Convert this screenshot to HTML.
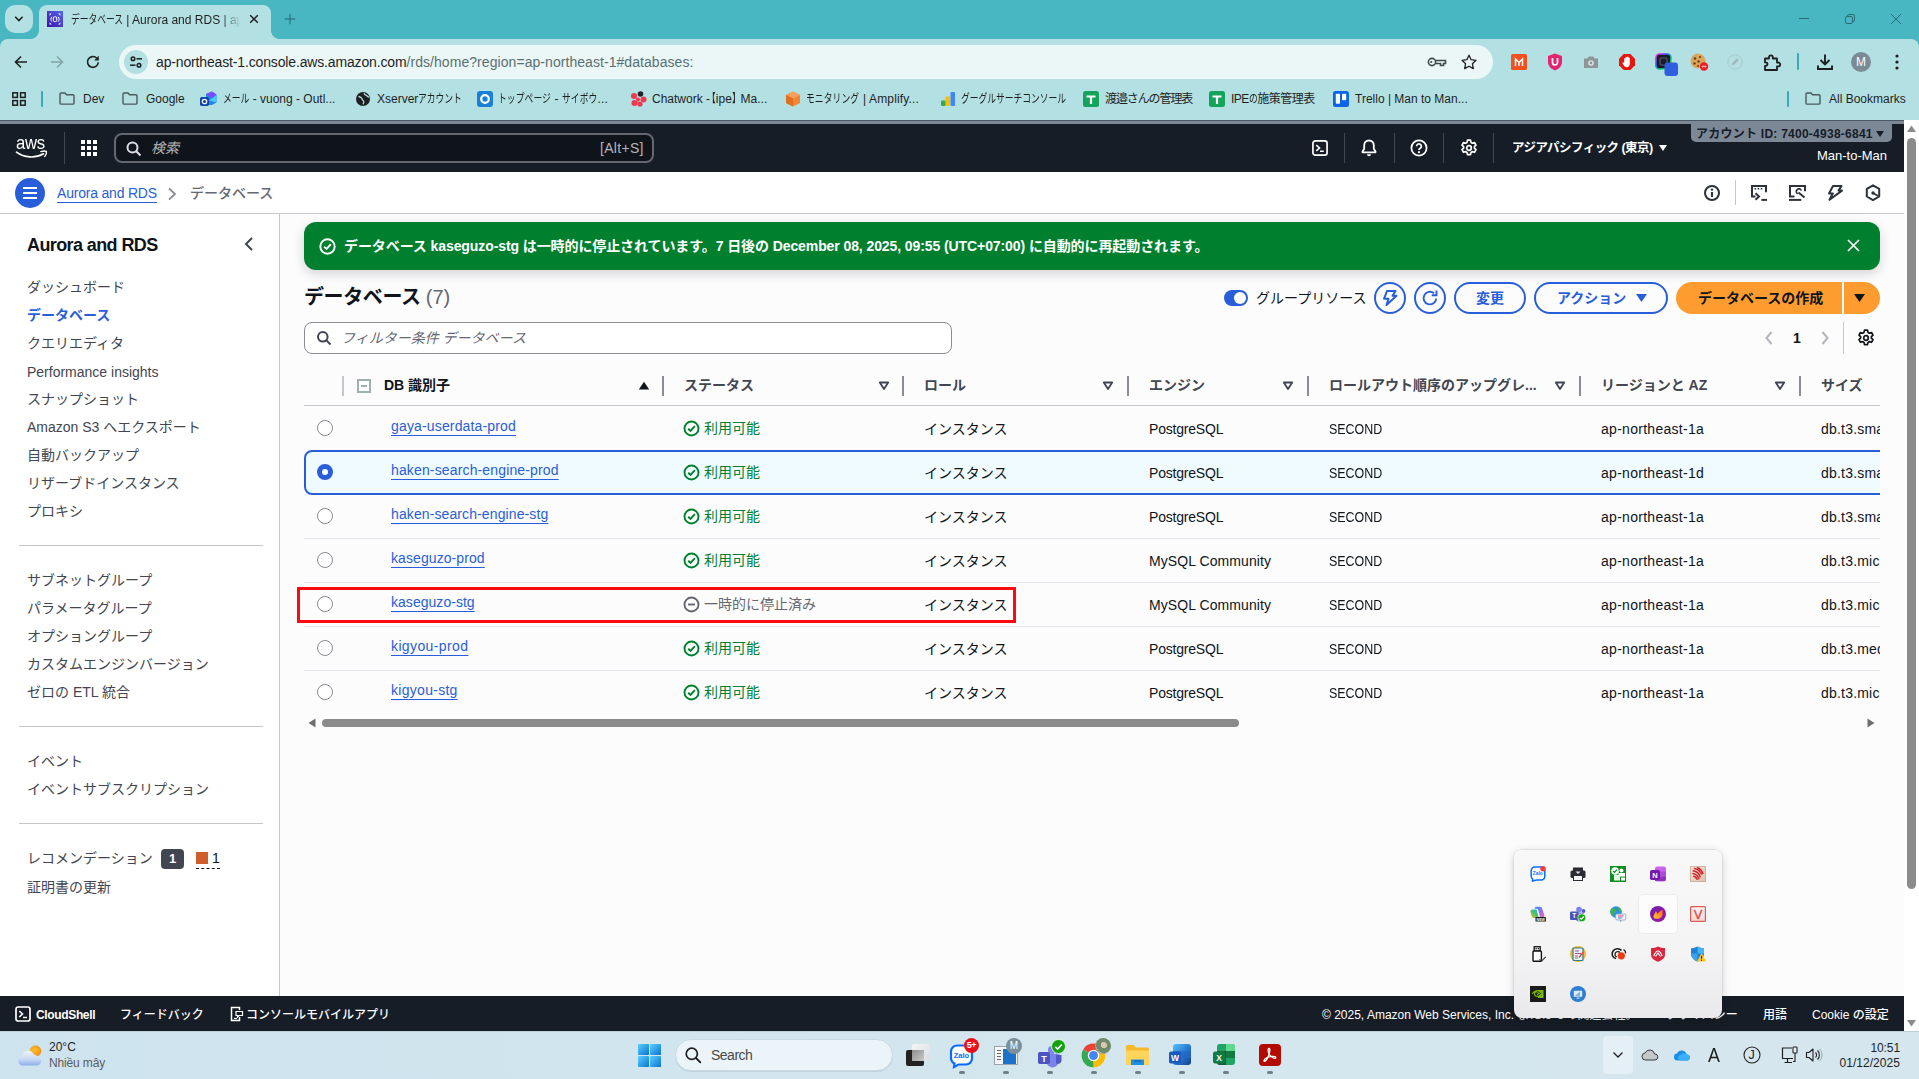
<!DOCTYPE html>
<html lang="ja">
<head>
<meta charset="utf-8">
<title>データベース | Aurora and RDS</title>
<style>
*{box-sizing:border-box;margin:0;padding:0}
html,body{width:1919px;height:1079px;overflow:hidden;background:#fff}
body{position:relative;font-family:"Liberation Sans","Noto Sans CJK JP",sans-serif;font-size:14px;color:#0f141a}
.abs{position:absolute}
.t{position:absolute;white-space:nowrap;line-height:20px}
svg{position:absolute;overflow:visible}
/* ---------- chrome ---------- */
#tabstrip{left:0;top:0;width:1919px;height:50px;background:#48b7c1}
#toolbar{left:0;top:39px;width:1919px;height:81px;background:#b3e0e3;border-radius:8px 8px 0 0}
#tabsearch{left:5px;top:5px;width:28px;height:28px;border-radius:10px;background:#b3e0e3}
#tab{left:39px;top:5px;width:232px;height:34px;border-radius:8px 8px 0 0;background:#b3e0e3}
#tab:before,#tab:after{content:"";position:absolute;bottom:0;width:8px;height:8px;background:radial-gradient(circle at 0 0,rgba(0,0,0,0) 7.5px,#b3e0e3 8px)}
#tab:before{left:-8px}
#tab:after{right:-8px;background:radial-gradient(circle at 100% 0,rgba(0,0,0,0) 7.5px,#b3e0e3 8px)}
#urlbar{left:119px;top:45px;width:1374px;height:34px;border-radius:17px;background:#ebf7f7}
.kk{display:inline-block;transform:scaleX(.73);transform-origin:0 50%;margin-right:calc(var(--n) * -3.24px)}
.ct{font-size:12px;color:#1f1f1f;line-height:16px}
.bm{font-size:12px;color:#1f1f1f;line-height:16px;top:91px}
/* ---------- aws ---------- */
#awsnav{left:0;top:120px;width:1904px;height:52px;background:#161d26}
#crumbs{left:0;top:172px;width:1904px;height:42px;background:#fff;border-bottom:1px solid #c6c6cd}
#side{left:0;top:214px;width:280px;height:782px;background:#fff;border-right:1px solid #c6c6cd}
#main{left:280px;top:214px;width:1624px;height:782px;background:#fcfcfd}
.sn{left:27px;color:#424650;font-size:14px}
.sdiv{left:19px;width:244px;height:1px;background:#c6c6cd}
.th{font-weight:700;color:#424650;top:375px}
.cdiv{top:376px;width:2px;height:20px;background:#8c8c94}
.row{left:304px;width:1576px;height:44px;border-bottom:1px solid #ebebf0}
.radio{left:317px;width:16px;height:16px;border-radius:50%;border:1px solid #8c8c94;background:#fff}
.lnk{left:391px;color:#295eda;text-decoration:underline;text-underline-offset:4px;text-decoration-thickness:1px;letter-spacing:.15px}
.ok{left:704px;color:#00802f}
.c3{left:924px}.c4{left:1149px}.c5{left:1329px}.c6{left:1601px}.c7{left:1821px}
#awsfoot{left:0;top:996px;width:1904px;height:35px;background:#161d26}
.ft{font-size:12px;color:#fff;line-height:16px;top:1007px}
/* ---------- windows ---------- */
#taskbar{left:0;top:1031px;width:1919px;height:48px;border-top:1px solid #bfcdd5;background:linear-gradient(90deg,#cde3ee 0%,#d3e6ee 50%,#d6e6ee 100%)}
#tray{left:1514px;top:850px;width:208px;height:168px;border-radius:8px;background:linear-gradient(180deg,#f8f8f8 0%,#f4f4f5 60%,#e9e9ec 100%);box-shadow:0 2px 10px rgba(0,0,0,.18),0 0 0 1px rgba(0,0,0,.06)}
</style>
</head>
<body>
<!-- CHROME -->
<div class="abs" id="tabstrip"></div>
<div class="abs" id="toolbar"></div>
<div class="abs" id="tabsearch"></div>
<div class="abs" id="tab"></div>
<div class="abs" id="urlbar"></div>
<!--CHROME-CONTENT-START-->
<!-- tab search chevron -->
<svg style="left:12px;top:14px" width="13" height="10" viewBox="0 0 13 10"><path d="M3.2 2.8 6.9 6.5 10.600 2.8" fill="none" stroke="#1f1f1f" stroke-width="1.600"/></svg>
<!-- favicon -->
<svg style="left:47px;top:11px" width="16" height="16" viewBox="0 0 16 16"><defs><linearGradient id="fg" x1="0" y1="1" x2="1" y2="0"><stop offset="0" stop-color="#3a12a8"/><stop offset="1" stop-color="#5568f0"/></linearGradient></defs><rect width="16" height="16" fill="url(#fg)"/><g fill="#fff"><path d="M2.600 2.600h2.200L2.600 4.800zM13.400 2.600v2.200L11.200 2.600zM2.600 13.400v-2.200l2.200 2.200zM13.400 13.400h-2.200l2.200-2.200z"/></g><g fill="none" stroke="#fff" stroke-width="1"><rect x="6.300" y="5.800" width="3.400" height="4.800" rx="1.200"/><path d="M4.800 5.800c-1.200 1.400-1.200 3.400 0 4.800M11.200 5.800c1.200 1.400 1.200 3.400 0 4.800"/></g></svg>
<div class="t ct" style="left:71px;top:8px;line-height:24px;width:172px;overflow:hidden;-webkit-mask-image:linear-gradient(90deg,#000 150px,transparent 170px);mask-image:linear-gradient(90deg,#000 150px,transparent 170px)"><span class="kk" style="--n:6">データベース</span> | Aurora and RDS | ap-northeast-1</div>
<svg style="left:249px;top:14px" width="10" height="10" viewBox="0 0 10 10"><path d="M1.2 1.2 8.8 8.8M8.8 1.2 1.2 8.8" stroke="#1f1f1f" stroke-width="1.5"/></svg>
<svg style="left:284px;top:13px" width="12" height="12" viewBox="0 0 12 12"><path d="M6 .8v10.4M.8 6h10.4" stroke="#2f7f88" stroke-width="1.4"/></svg>
<!-- window controls -->
<svg style="left:1798px;top:13px" width="12" height="12" viewBox="0 0 12 12"><path d="M1 5.5h10" stroke="#2c6d75" stroke-width="1"/></svg>
<svg style="left:1844px;top:13px" width="12" height="12" viewBox="0 0 12 12"><g fill="none" stroke="#2c6d75" stroke-width="1"><rect x="1.5" y="3.5" width="7" height="7" rx="1.5"/><path d="M3.5 3.5v-.5a1.5 1.5 0 0 1 1.500-1.500h4a1.500 1.500 0 0 1 1.500 1.500v4a1.500 1.500 0 0 1-1.500 1.500h-.5"/></g></svg>
<svg style="left:1890px;top:13px" width="12" height="12" viewBox="0 0 12 12"><path d="M1 1 11 11M11 1 1 11" stroke="#2c6d75" stroke-width="1"/></svg>
<!-- nav buttons -->
<svg style="left:13px;top:54px" width="16" height="16" viewBox="0 0 16 16"><path d="M14 8H3M8 2.500 2.500 8 8 13.500" fill="none" stroke="#1f1f1f" stroke-width="1.600"/></svg>
<svg style="left:49px;top:54px" width="16" height="16" viewBox="0 0 16 16"><path d="M2 8h11M8 2.500 13.500 8 8 13.500" fill="none" stroke="#84a4a7" stroke-width="1.500"/></svg>
<svg style="left:85px;top:54px" width="16" height="16" viewBox="0 0 16 16"><path d="M13.300 8.300A5.400 5.400 0 1 1 11.700 4.100" fill="none" stroke="#1f1f1f" stroke-width="1.600"/><path d="M13.800 1.800v4.600H9.200z" fill="#1f1f1f"/></svg>
<!-- site info -->
<div class="abs" style="left:124px;top:50px;width:24px;height:24px;border-radius:12px;background:#b3e0e3"></div>
<svg style="left:129px;top:55px" width="14" height="14" viewBox="0 0 14 14"><g fill="none" stroke="#1f1f1f" stroke-width="1.500"><circle cx="4" cy="3.800" r="1.800"/><path d="M7.500 3.800H13"/><circle cx="10" cy="10.200" r="1.800"/><path d="M1 10.200H6.500"/></g></svg>
<div class="t" style="left:156px;top:52px;font-size:14px;color:#1f1f1f;letter-spacing:-.15px">ap-northeast-1.console.aws.amazon.com<span style="color:#5a6f72;letter-spacing:.06px">/rds/home?region=ap-northeast-1#databases:</span></div>
<!-- key -->
<svg style="left:1427px;top:55px" width="20" height="14" viewBox="0 0 20 14"><g fill="none" stroke="#3c4a4c" stroke-width="1.600"><circle cx="5" cy="7" r="3.600"/><path d="M8.600 5.500H18.500V8.500H16.500V10.500H13.500V8.500H8.600"/></g><circle cx="4.300" cy="7" r="1.100" fill="#3c4a4c"/></svg>
<!-- star -->
<svg style="left:1460px;top:53px" width="18" height="18" viewBox="0 0 18 18"><path d="M9 2.200l2.100 4.500 4.900.6-3.600 3.400.9 4.900L9 13.200l-4.300 2.400.9-4.900L2 7.300l4.900-.6z" fill="none" stroke="#1f1f1f" stroke-width="1.300" stroke-linejoin="round"/></svg>
<!-- extensions -->
<svg style="left:1511px;top:54px" width="16" height="16" viewBox="0 0 16 16"><rect width="16" height="16" rx="1.500" fill="#f4511e"/><path d="M4.500 12V5l3.500 3.500L11.500 5v7M8 8.500V12" fill="none" stroke="#fff" stroke-width="1.500"/></svg>
<svg style="left:1547px;top:53px" width="16" height="18" viewBox="0 0 16 18"><path d="M8 .5 15 3v6c0 4-3 7-7 8.500C4 16 1 13 1 9V3z" fill="#e6246f"/><path d="M5.500 5v4.500a2.500 2.500 0 0 0 5 0V5" fill="none" stroke="#fff" stroke-width="1.700"/></svg>
<svg style="left:1583px;top:55px" width="16" height="14" viewBox="0 0 16 14"><path d="M1 3.500h3.500L5.800 1.500h4.400l1.300 2H15V13H1z" fill="#8c9597"/><circle cx="8" cy="8" r="2.800" fill="#dfe9ea"/><circle cx="8" cy="8" r="1.400" fill="#8c9597"/></svg>
<svg style="left:1619px;top:54px" width="16" height="16" viewBox="0 0 16 16"><path d="M4.700 0h6.600L16 4.700v6.600L11.300 16H4.700L0 11.300V4.700z" fill="#e8140e"/><path d="M5.200 8.500V4.800a.7.700 0 0 1 1.400 0V3.600a.7.700 0 0 1 1.400 0v-.4a.7.700 0 0 1 1.400 0v1a.7.700 0 0 1 1.400 0V10c0 2-1.200 3.200-3 3.200-1.600 0-2.400-.8-3.200-2.200L3.500 9.200c-.3-.6.500-1.100 1-.6z" fill="#fff"/></svg>
<svg style="left:1654.500px;top:53px" width="24" height="24" viewBox="0 0 24 24"><defs><linearGradient id="rb" x1="0" y1="0" x2="1" y2="1"><stop offset="0" stop-color="#ff2bd1"/><stop offset=".35" stop-color="#3d5afe"/><stop offset=".7" stop-color="#00e676"/><stop offset="1" stop-color="#ffea00"/></linearGradient></defs><rect x="1" y="1" width="15" height="15" rx="3.500" fill="#1b1b2a" stroke="url(#rb)" stroke-width="1.600"/><rect x="5" y="5" width="7" height="7" rx="1.500" fill="none" stroke="#555a70" stroke-width="1.200"/><rect x="9.500" y="9.500" width="13.500" height="13.500" rx="3" fill="#2f5fe0"/></svg>
<svg style="left:1690px;top:53px" width="20" height="20" viewBox="0 0 20 20"><circle cx="8" cy="8" r="7.500" fill="#dba55c"/><g fill="#6b3d14"><circle cx="5" cy="5.500" r="1.300"/><circle cx="10" cy="4" r="1.100"/><circle cx="4.500" cy="10.500" r="1.200"/><circle cx="8.500" cy="8.500" r="1.200"/><circle cx="8" cy="13" r="1"/></g><circle cx="14" cy="13.500" r="4.200" fill="#ea1c24"/><path d="M12.300 13.500h3.400M13 12.200l-1 1.300 1 1.300M15 12.200l1 1.300-1 1.300" stroke="#fff" stroke-width=".6" fill="none"/></svg>
<svg style="left:1727px;top:54px" width="16" height="16" viewBox="0 0 16 16"><circle cx="8" cy="8" r="7.200" fill="none" stroke="#a9c9cc" stroke-width="1"/><path d="M4.800 11.200 5.300 9 10 4.300l1.700 1.700L7 10.700z" fill="#a3b6b8"/></svg>
<svg style="left:1762px;top:52px" width="20" height="20" viewBox="0 0 20 20"><path d="M3 6.500h4V5.200a1.900 1.900 0 1 1 3.800 0V6.500H15v4h1.300a1.900 1.900 0 1 1 0 3.800H15V18H3v-4.200h.8a1.700 1.700 0 1 0 0-3.400H3z" fill="none" stroke="#1f1f1f" stroke-width="1.800" stroke-linejoin="round"/></svg>
<div class="abs" style="left:1797px;top:53px;width:2px;height:17px;background:#3aa9b4;border-radius:1px"></div>
<svg style="left:1816px;top:53px" width="18" height="18" viewBox="0 0 18 18"><path d="M9 1.500v9.500M4.500 7 9 11.500 13.500 7M2 12.500V16h14v-3.500" fill="none" stroke="#1f1f1f" stroke-width="1.900"/></svg>
<div class="abs" style="left:1851px;top:52px;width:20px;height:20px;border-radius:10px;background:#7b8b96;color:#fff;font-size:12px;line-height:20px;text-align:center">M</div>
<svg style="left:1895px;top:54px" width="4" height="16" viewBox="0 0 4 16"><g fill="#1f1f1f"><circle cx="2" cy="2" r="1.600"/><circle cx="2" cy="8" r="1.600"/><circle cx="2" cy="14" r="1.600"/></g></svg>
<!-- bookmarks bar -->
<svg style="left:12px;top:92px" width="14" height="14" viewBox="0 0 14 14"><g fill="none" stroke="#1f1f1f" stroke-width="1.500"><rect x=".8" y=".8" width="4.600" height="4.600"/><rect x="8.600" y=".8" width="4.600" height="4.600"/><rect x=".8" y="8.600" width="4.600" height="4.600"/><rect x="8.600" y="8.600" width="4.600" height="4.600"/></g></svg>
<div class="abs" style="left:41px;top:91px;width:2px;height:16px;background:#3aa9b4;border-radius:1px"></div>
<svg class="fold" style="left:59px;top:92px" width="16" height="13" viewBox="0 0 16 13"><path d="M1 2.200A1.200 1.200 0 0 1 2.200 1H6l1.500 1.700h6.300A1.200 1.200 0 0 1 15 3.900v7A1.200 1.200 0 0 1 13.800 12.100H2.200A1.200 1.200 0 0 1 1 10.900z" fill="none" stroke="#4a5a5c" stroke-width="1.400"/></svg>
<div class="t bm" style="left:83px">Dev</div>
<svg class="fold" style="left:122px;top:92px" width="16" height="13" viewBox="0 0 16 13"><path d="M1 2.200A1.200 1.200 0 0 1 2.200 1H6l1.500 1.700h6.300A1.200 1.200 0 0 1 15 3.900v7A1.200 1.200 0 0 1 13.800 12.100H2.200A1.200 1.200 0 0 1 1 10.900z" fill="none" stroke="#4a5a5c" stroke-width="1.400"/></svg>
<div class="t bm" style="left:146px">Google</div>
<svg style="left:200px;top:91px" width="17" height="16" viewBox="0 0 17 16"><path d="M6 3 12 .5 16.500 3.500v8L12 14H6z" fill="#1e88e5"/><path d="M6 3l6-2.500L16.500 3.500 11 7z" fill="#7c4dff"/><path d="M16.500 4 9 9.500l7.500 2z" fill="#4fc3f7"/><rect x="0" y="6" width="9" height="9" rx="1.800" fill="#0d47a1"/><circle cx="4.500" cy="10.500" r="2.200" fill="none" stroke="#fff" stroke-width="1.300"/></svg>
<div class="t bm" style="left:223px"><span class="kk" style="--n:3">メール</span> - vuong - Outl...</div>
<svg style="left:356px;top:92px" width="14" height="14" viewBox="0 0 14 14"><circle cx="7" cy="7" r="7" fill="#1f1f1f"/><path d="M2.500 4.500c1.500 0 2 .8 3 1.500s.5 2 1.500 2.500 1 2.500 0 3.800M8 1.200c.2 1.500 1.200 1.800 2.300 2.200s1.500 1.800 2.700 1.600" fill="none" stroke="#b3e0e3" stroke-width="1.300"/></svg>
<div class="t bm" style="left:377px">Xserver<span class="kk" style="--n:5">アカウント</span></div>
<svg style="left:477px;top:91px" width="16" height="16" viewBox="0 0 16 16"><rect width="16" height="16" rx="3" fill="#1a7fd6"/><circle cx="8" cy="8" r="3.800" fill="none" stroke="#fff" stroke-width="2.200"/></svg>
<div class="t bm" style="left:498px;letter-spacing:.12px"><span class="kk" style="--n:6">トップページ</span> - <span class="kk" style="--n:4">サイボウ</span>...</div>
<svg style="left:630px;top:91px" width="17" height="16" viewBox="0 0 17 16"><circle cx="10.500" cy="3" r="2.800" fill="#1f2430"/><g fill="#f0384e"><circle cx="4" cy="5" r="3"/><circle cx="13.500" cy="8.500" r="3"/><circle cx="4.500" cy="12" r="3"/><circle cx="10" cy="13" r="2.600"/><circle cx="8" cy="8.500" r="2"/></g></svg>
<div class="t bm" style="left:652px">Chatwork -<span class="kk" style="--n:1;margin-left:-3px">【</span>ipe<span class="kk" style="--n:1">】</span>Ma...</div>
<svg style="left:785px;top:91px" width="16" height="16" viewBox="0 0 16 16"><path d="M8 .5 15 4v8L8 15.500 1 12V4z" fill="#f58536"/><path d="M8 .5 15 4 8 7.500 1 4z" fill="#f9a05c"/><path d="M8 7.500V15.500L1 12V4z" fill="#e0701f"/></svg>
<div class="t bm" style="left:806px;letter-spacing:.15px"><span class="kk" style="--n:6">モニタリング</span> | Amplify...</div>
<svg style="left:940px;top:91px" width="16" height="16" viewBox="0 0 16 16"><rect x="10.500" y="1" width="4.500" height="14" rx="1" fill="#4285f4"/><rect x="5.500" y="5.500" width="4.500" height="9.500" rx="1" fill="#fbbc04"/><rect x="1" y="9.500" width="4.500" height="5.500" rx="1" fill="#34a853"/></svg>
<div class="t bm" style="left:961px"><span class="kk" style="--n:12">グーグルサーチコンソール</span></div>
<svg style="left:1083px;top:91px" width="16" height="16" viewBox="0 0 16 16"><rect width="16" height="16" rx="2.500" fill="#14a35b"/><path d="M3.500 5.500h9M8 5.500V13" stroke="#fff" stroke-width="2.200"/></svg>
<div class="t bm" style="left:1105px;letter-spacing:-1.100px">渡邉さんの管理表</div>
<svg style="left:1209px;top:91px" width="16" height="16" viewBox="0 0 16 16"><rect width="16" height="16" rx="2.500" fill="#14a35b"/><path d="M3.500 5.500h9M8 5.500V13" stroke="#fff" stroke-width="2.200"/></svg>
<div class="t bm" style="left:1231px;letter-spacing:-.5px">IPE<span class="kk" style="--n:1">の</span>施策管理表</div>
<svg style="left:1333px;top:91px" width="16" height="16" viewBox="0 0 16 16"><rect width="16" height="16" rx="2.500" fill="#0c66e4"/><rect x="2.800" y="2.800" width="4.200" height="10" rx=".8" fill="#fff"/><rect x="9" y="2.800" width="4.200" height="6.500" rx=".8" fill="#fff"/></svg>
<div class="t bm" style="left:1355px">Trello | Man to Man...</div>
<div class="abs" style="left:1787px;top:91px;width:2px;height:16px;background:#3aa9b4;border-radius:1px"></div>
<svg class="fold" style="left:1805px;top:92px" width="16" height="13" viewBox="0 0 16 13"><path d="M1 2.200A1.200 1.200 0 0 1 2.200 1H6l1.500 1.700h6.300A1.200 1.200 0 0 1 15 3.900v7A1.200 1.200 0 0 1 13.800 12.100H2.200A1.200 1.200 0 0 1 1 10.900z" fill="none" stroke="#4a5a5c" stroke-width="1.400"/></svg>
<div class="t bm" style="left:1829px">All Bookmarks</div>
<!--CHROME-CONTENT-END-->

<!-- AWS -->
<div class="abs" id="awsnav"></div>
<div class="abs" id="crumbs"></div>
<div class="abs" id="side"></div>
<div class="abs" id="main"></div>
<!--AWS-NAV-START-->
<div class="abs" style="left:0;top:120px;width:1904px;height:4px;background:#7c8896"></div>
<div class="abs" style="left:0;top:120px;width:1904px;height:1px;background:#4d5763"></div>
<!-- aws logo -->
<div class="t" style="left:16px;top:132px;font-size:19px;line-height:22px;color:#fff;transform:scaleX(.88);transform-origin:0 50%;letter-spacing:-.3px">aws</div>
<svg style="left:15px;top:150px" width="34" height="11" viewBox="0 0 34 11"><path d="M1.500 2.200c7.500 5.800 19 6.300 27 1.600" fill="none" stroke="#fff" stroke-width="1.700" stroke-linecap="round"/><path d="M25.800 1.600c2.200-.6 4.400-.7 5.600-.2.300 1.200-.3 3.400-1.600 5" fill="none" stroke="#fff" stroke-width="1.400" stroke-linecap="round"/></svg>
<div class="abs" style="left:64px;top:132px;width:1px;height:32px;background:#424650"></div>
<!-- services grid -->
<svg style="left:81px;top:140px" width="16" height="16" viewBox="0 0 16 16"><g fill="#fff"><rect x="0" y="0" width="4" height="4"/><rect x="6" y="0" width="4" height="4"/><rect x="12" y="0" width="4" height="4"/><rect x="0" y="6" width="4" height="4"/><rect x="6" y="6" width="4" height="4"/><rect x="12" y="6" width="4" height="4"/><rect x="0" y="12" width="4" height="4"/><rect x="6" y="12" width="4" height="4"/><rect x="12" y="12" width="4" height="4"/></g></svg>
<!-- search -->
<div class="abs" style="left:114px;top:133px;width:540px;height:30px;border:2px solid #656871;border-radius:8px;background:#0f141a"></div>
<svg style="left:126px;top:141px" width="16" height="16" viewBox="0 0 16 16"><circle cx="6.500" cy="6.500" r="5" fill="none" stroke="#dedee3" stroke-width="2"/><path d="M10.200 10.200 14.500 14.500" stroke="#dedee3" stroke-width="2"/></svg>
<div class="t" style="left:151px;top:138px;font-style:italic;color:#b4b4bb;font-size:14px">検索</div>
<div class="t" style="left:600px;top:138px;color:#b4b4bb;font-size:14px;letter-spacing:.3px">[Alt+S]</div>
<!-- right icons -->
<svg style="left:1312px;top:140px" width="16" height="16" viewBox="0 0 17 17"><rect x="1" y="1" width="15" height="15" rx="2.500" fill="none" stroke="#fff" stroke-width="1.800"/><path d="M4.500 5.500 8 8.500 4.500 11.500M8.500 12h4" fill="none" stroke="#fff" stroke-width="1.700"/></svg>
<div class="abs" style="left:1344px;top:133px;width:1px;height:30px;background:#424650"></div>
<svg style="left:1361px;top:139px" width="16" height="18" viewBox="0 0 16 18"><path d="M8 1.500c-3 0-4.800 2.200-4.800 5v3.200L1.500 12.500v.8h13v-.8l-1.700-2.800V6.500c0-2.800-1.800-5-4.800-5z" fill="none" stroke="#fff" stroke-width="1.800" stroke-linejoin="round"/><path d="M6 15.200a2 2 0 0 0 4 0z" fill="#fff"/></svg>
<div class="abs" style="left:1394px;top:133px;width:1px;height:30px;background:#424650"></div>
<svg style="left:1410px;top:139px" width="18" height="18" viewBox="0 0 18 18"><circle cx="9" cy="9" r="7.600" fill="none" stroke="#fff" stroke-width="1.800"/><path d="M6.600 7.200a2.400 2.400 0 1 1 3.600 2.100c-.8.500-1.200.9-1.200 1.700" fill="none" stroke="#fff" stroke-width="1.700"/><circle cx="9" cy="13.200" r="1.100" fill="#fff"/></svg>
<div class="abs" style="left:1443px;top:133px;width:1px;height:30px;background:#424650"></div>
<svg style="left:1460px;top:139px" width="18" height="18" viewBox="0 0 18 18"><path d="M7.500 1.200h3l.5 2.200 1.400.8 2.100-.7 1.500 2.600-1.600 1.500v1.600l1.600 1.500-1.500 2.600-2.100-.7-1.400.8-.5 2.200h-3L7 13.400l-1.400-.8-2.100.7L2 10.700l1.600-1.500V7.600L2 6.100l1.500-2.600 2.100.7L7 3.400z" fill="none" stroke="#fff" stroke-width="1.700" stroke-linejoin="round"/><circle cx="9" cy="9" r="2.300" fill="none" stroke="#fff" stroke-width="1.700"/></svg>
<div class="abs" style="left:1493px;top:133px;width:1px;height:30px;background:#424650"></div>
<div class="t" style="left:1512px;top:138px;color:#fff;font-size:12.500px;font-weight:700;letter-spacing:-.55px">アジアパシフィック (東京)</div>
<svg style="left:1658px;top:144px" width="10" height="8" viewBox="0 0 10 8"><path d="M1 1h8L5 7z" fill="#fff"/></svg>
<!-- account -->
<div class="abs" style="left:1691px;top:123px;width:201px;height:19px;background:#7c8896;border-radius:0 0 5px 5px"></div>
<div class="t" style="left:1696px;top:125px;font-size:12px;line-height:18px;font-weight:700;color:#161d26;letter-spacing:.25px">アカウント ID: 7400-4938-6841</div>
<svg style="left:1875px;top:130px" width="10" height="8" viewBox="0 0 10 8"><path d="M1 1h8L5 7z" fill="#161d26"/></svg>
<div class="t" style="left:1787px;top:146px;width:100px;text-align:right;color:#fff;font-size:13px">Man-to-Man</div>
<!-- breadcrumb row -->
<div class="abs" style="left:15px;top:178px;width:30px;height:30px;border-radius:15px;background:#295eda"></div>
<svg style="left:23px;top:186px" width="14" height="14" viewBox="0 0 14 14"><path d="M0 2h14M0 7h14M0 12h14" stroke="#fff" stroke-width="2"/></svg>
<div class="t" style="left:57px;top:183px;color:#295eda;text-decoration:underline;text-underline-offset:4px;text-decoration-thickness:1px;letter-spacing:-.2px">Aurora and RDS</div>
<svg style="left:167px;top:187px" width="10" height="14" viewBox="0 0 10 14"><path d="M2 1.500 8 7 2 12.500" fill="none" stroke="#8c8c94" stroke-width="1.800"/></svg>
<div class="t" style="left:190px;top:183px;color:#656871;font-weight:500">データベース</div>
<svg style="left:1704px;top:185px" width="16" height="16" viewBox="0 0 16 16"><circle cx="8" cy="8" r="7" fill="none" stroke="#2c313c" stroke-width="2"/><path d="M8 7v5" stroke="#2c313c" stroke-width="2"/><circle cx="8" cy="4.600" r="1.200" fill="#2c313c"/></svg>
<div class="abs" style="left:1735px;top:180px;width:1px;height:25px;background:#c6c6cd"></div>
<svg style="left:1751px;top:185px" width="16" height="16" viewBox="0 0 16 16"><path d="M15 7.300V1H1v10.500h3.500" fill="none" stroke="#2c313c" stroke-width="2"/><path d="M3.500 3.700h1.600M6.600 3.700h1.600M9.700 3.700h1.600" stroke="#2c313c" stroke-width="1.500"/><path d="M4.500 8.300 8 11.500l-3.500 3.200" fill="none" stroke="#2c313c" stroke-width="2"/><path d="M10.400 14.900H16" stroke="#2c313c" stroke-width="2"/></svg>
<svg style="left:1789px;top:185px" width="17" height="16" viewBox="0 0 17 16"><path d="M16 6.300V1H1v10.500h4.500" fill="none" stroke="#2c313c" stroke-width="2"/><path d="M0 14.900h12.300" stroke="#2c313c" stroke-width="2"/><path d="M9.500 7.500 15.500 12.500" stroke="#2c313c" stroke-width="2"/><path d="M12.300 5.500a2.600 2.600 0 1 0-3.600 3.300" fill="none" stroke="#2c313c" stroke-width="1.700"/></svg>
<svg style="left:1827px;top:184px" width="16" height="18" viewBox="0 0 16 18"><path d="M6 2h8.500l-3 4.600h3.500L2.500 15.800 5.800 9.500H2z" fill="none" stroke="#2c313c" stroke-width="2" stroke-linejoin="round"/></svg>
<svg style="left:1865px;top:184px" width="16" height="18" viewBox="0 0 16 18"><path d="M8 1.300 14.200 4.900v7.600L8 16.100 1.800 12.500V4.900z" fill="none" stroke="#2c313c" stroke-width="2" stroke-linejoin="round"/><circle cx="8" cy="9" r="1.700" fill="#2c313c"/><path d="M8 9l5.500 3.200" stroke="#2c313c" stroke-width="1.800"/></svg>
<!--AWS-NAV-END-->
<!--AWS-SIDE-START-->
<div class="t" style="left:27px;top:233px;font-size:18px;line-height:24px;font-weight:700;color:#0f141a;letter-spacing:-.6px">Aurora and RDS</div>
<svg style="left:243px;top:236px" width="12" height="16" viewBox="0 0 12 16"><path d="M9 2 3 8l6 6" fill="none" stroke="#424650" stroke-width="2"/></svg>
<div class="t sn" style="top:277px;">ダッシュボード</div>
<div class="t sn" style="top:305px;color:#295eda;font-weight:700">データベース</div>
<div class="t sn" style="top:333px;">クエリエディタ</div>
<div class="t sn" style="top:362px;">Performance insights</div>
<div class="t sn" style="top:389px;">スナップショット</div>
<div class="t sn" style="top:417px;">Amazon S3 へエクスポート</div>
<div class="t sn" style="top:445px;">自動バックアップ</div>
<div class="t sn" style="top:473px;">リザーブドインスタンス</div>
<div class="t sn" style="top:501px;">プロキシ</div>
<div class="t sn" style="top:570px;">サブネットグループ</div>
<div class="t sn" style="top:598px;">パラメータグループ</div>
<div class="t sn" style="top:626px;">オプショングループ</div>
<div class="t sn" style="top:654px;">カスタムエンジンバージョン</div>
<div class="t sn" style="top:682px;">ゼロの ETL 統合</div>
<div class="t sn" style="top:751px;">イベント</div>
<div class="t sn" style="top:779px;">イベントサブスクリプション</div>
<div class="t sn" style="top:848px;">レコメンデーション</div>
<div class="t sn" style="top:877px;">証明書の更新</div>
<div class="abs sdiv" style="top:545px"></div>
<div class="abs sdiv" style="top:726px"></div>
<div class="abs sdiv" style="top:823px"></div>
<div class="abs" style="left:161px;top:849px;width:23px;height:20px;border-radius:4px;background:#424650;color:#fff;font-size:13px;font-weight:700;line-height:20px;text-align:center">1</div>
<div class="abs" style="left:196px;top:852px;width:12px;height:12px;background:#cf5f2a"></div>
<div class="t" style="left:212px;top:848px;color:#0f141a">1</div>
<div class="abs" style="left:196px;top:868px;width:24px;height:0;border-top:1px dashed #0f141a"></div>
<!--AWS-SIDE-END-->
<!--AWS-MAIN-START-->
<div class="abs" style="left:304px;top:222px;width:1576px;height:48px;border-radius:12px;background:#00802f;box-shadow:0 4px 12px rgba(0,7,22,.16)"></div>
<svg style="left:319px;top:238px" width="17" height="17" viewBox="0 0 17 17"><circle cx="8.500" cy="8.500" r="7.200" fill="none" stroke="#fff" stroke-width="1.900"/><path d="M5.200 8.700 7.600 11 11.900 6.200" fill="none" stroke="#fff" stroke-width="1.900"/></svg>
<div class="t" style="left:344px;top:236px;color:#fff;font-weight:700;letter-spacing:-.09px">データベース kaseguzo-stg は一時的に停止されています。7 日後の December 08, 2025, 09:55 (UTC+07:00) に自動的に再起動されます。</div>
<svg style="left:1847px;top:239px" width="13" height="13" viewBox="0 0 13 13"><path d="M1 1 12 12M12 1 1 12" stroke="#fff" stroke-width="1.700"/></svg>
<div class="t" style="left:304px;top:283px;font-size:20px;line-height:28px;font-weight:700;color:#0f141a;letter-spacing:-.4px">データベース <span style="font-weight:400;color:#656871;letter-spacing:0">(7)</span></div>
<div class="abs" style="left:1224px;top:290px;width:24px;height:16px;border-radius:8px;background:#295eda"></div>
<div class="abs" style="left:1234px;top:292px;width:12px;height:12px;border-radius:6px;background:#fff"></div>
<div class="t" style="left:1256px;top:288px;color:#0f141a">グループリソース</div>
<div class="abs" style="left:1374px;top:282px;width:32px;height:32px;border-radius:16px;border:2px solid #295eda"></div>
<svg style="left:1381px;top:288px" width="18" height="20" viewBox="0 0 18 20"><path d="M6 3h8.500l-3 4.800h4L5.500 17l2-6.200H3z" fill="none" stroke="#295eda" stroke-width="2" stroke-linejoin="round"/></svg>
<div class="abs" style="left:1414px;top:282px;width:32px;height:32px;border-radius:16px;border:2px solid #295eda"></div>
<svg style="left:1421px;top:289px" width="18" height="18" viewBox="0 0 18 18"><path d="M15.200 9.500A6.300 6.300 0 1 1 13 4.300" fill="none" stroke="#295eda" stroke-width="1.900"/><path d="M15.500 1.500v4.800h-4.800" fill="none" stroke="#295eda" stroke-width="1.900"/></svg>
<div class="abs" style="left:1454px;top:282px;width:72px;height:32px;border-radius:16px;border:2px solid #295eda;color:#295eda;font-weight:700;line-height:28px;text-align:center">変更</div>
<div class="abs" style="left:1534px;top:282px;width:134px;height:32px;border-radius:16px;border:2px solid #295eda;color:#295eda;font-weight:700;line-height:28px;padding-left:21px">アクション</div>
<svg style="left:1635px;top:293px" width="13" height="10" viewBox="0 0 13 10"><path d="M1 1h11L6.500 9z" fill="#295eda"/></svg>
<div class="abs" style="left:1676px;top:282px;width:166px;height:32px;border-radius:16px 0 0 16px;background:#ff9c2f;color:#0f141a;font-weight:700;line-height:32px;padding-left:22px">データベースの作成</div>
<div class="abs" style="left:1844px;top:282px;width:36px;height:32px;border-radius:0 16px 16px 0;background:#ff9c2f"></div>
<svg style="left:1853px;top:293px" width="13" height="10" viewBox="0 0 13 10"><path d="M1 1h11L6.500 9z" fill="#0f141a"/></svg>
<div class="abs" style="left:304px;top:322px;width:648px;height:32px;border:1px solid #8c8c94;border-radius:8px;background:#fff"></div>
<svg style="left:316px;top:330px" width="16" height="16" viewBox="0 0 16 16"><circle cx="6.800" cy="6.800" r="4.800" fill="none" stroke="#424650" stroke-width="2"/><path d="M10.400 10.400 14.500 14.500" stroke="#424650" stroke-width="2"/></svg>
<div class="t" style="left:341px;top:328px;color:#656871;font-style:italic">フィルター条件 データベース</div>
<svg style="left:1764px;top:331px" width="10" height="14" viewBox="0 0 10 14"><path d="M7.500 1 2.500 7l5 6" fill="none" stroke="#b4b4bb" stroke-width="2"/></svg>
<div class="t" style="left:1787px;top:328px;width:20px;text-align:center;font-weight:700;color:#0f141a">1</div>
<svg style="left:1820px;top:331px" width="10" height="14" viewBox="0 0 10 14"><path d="M2.500 1 7.500 7l-5 6" fill="none" stroke="#b4b4bb" stroke-width="2"/></svg>
<div class="abs" style="left:1843px;top:322px;width:1px;height:32px;background:#c6c6cd"></div>
<svg style="left:1857px;top:329px" width="18" height="18" viewBox="0 0 18 18"><path d="M7.500 1.200h3l.5 2.200 1.400.8 2.100-.7 1.500 2.600-1.600 1.500v1.600l1.600 1.500-1.500 2.600-2.100-.7-1.400.8-.5 2.200h-3L7 13.400l-1.400-.8-2.100.7L2 10.700l1.600-1.500V7.600L2 6.100l1.500-2.600 2.100.7L7 3.400z" fill="none" stroke="#0f141a" stroke-width="1.700" stroke-linejoin="round"/><circle cx="9" cy="9" r="2.300" fill="none" stroke="#0f141a" stroke-width="1.700"/></svg>
<div class="abs" style="left:304px;top:405px;width:1576px;height:1px;background:#c6c6cd"></div>
<div class="abs cdiv" style="left:342px;background:#c6c6cd"></div>
<div class="abs cdiv" style="left:662px"></div>
<div class="abs cdiv" style="left:902px"></div>
<div class="abs cdiv" style="left:1127px"></div>
<div class="abs cdiv" style="left:1307px"></div>
<div class="abs cdiv" style="left:1579px"></div>
<div class="abs cdiv" style="left:1799px"></div>
<div class="abs" style="left:357px;top:379px;width:14px;height:14px;border:2px solid #9fb0b0;background:#fff"></div><div class="abs" style="left:361px;top:385px;width:6px;height:2px;background:#9fb0b0"></div>
<div class="t th" style="left:384px;color:#0f141a">DB 識別子</div>
<div class="t th" style="left:684px">ステータス</div>
<div class="t th" style="left:924px">ロール</div>
<div class="t th" style="left:1149px">エンジン</div>
<div class="t th" style="left:1329px">ロールアウト順序のアップグレ...</div>
<div class="t th" style="left:1601px">リージョンと AZ</div>
<div class="t th" style="left:1821px">サイズ</div>
<svg style="left:638px;top:381px" width="12" height="9" viewBox="0 0 12 9"><path d="M.800 8.500h10.400L6 .800z" fill="#0f141a"/></svg>
<svg style="left:878px;top:381px" width="12" height="10" viewBox="0 0 12 10"><path d="M1.800 1.500h8.400L6 8z" fill="none" stroke="#424650" stroke-width="1.800" stroke-linejoin="round"/></svg>
<svg style="left:1102px;top:381px" width="12" height="10" viewBox="0 0 12 10"><path d="M1.800 1.500h8.400L6 8z" fill="none" stroke="#424650" stroke-width="1.800" stroke-linejoin="round"/></svg>
<svg style="left:1282px;top:381px" width="12" height="10" viewBox="0 0 12 10"><path d="M1.800 1.500h8.400L6 8z" fill="none" stroke="#424650" stroke-width="1.800" stroke-linejoin="round"/></svg>
<svg style="left:1554px;top:381px" width="12" height="10" viewBox="0 0 12 10"><path d="M1.800 1.500h8.400L6 8z" fill="none" stroke="#424650" stroke-width="1.800" stroke-linejoin="round"/></svg>
<svg style="left:1774px;top:381px" width="12" height="10" viewBox="0 0 12 10"><path d="M1.800 1.500h8.400L6 8z" fill="none" stroke="#424650" stroke-width="1.800" stroke-linejoin="round"/></svg>
<div class="abs" style="left:304px;top:450px;width:1590px;height:45px;border:2px solid #295eda;border-radius:8px;background:#f0fbff;clip-path:inset(0 14px 0 0)"></div>
<div class="abs radio" style="top:420px"></div>
<div class="t lnk" style="top:416px;letter-spacing:0.156px">gaya-userdata-prod</div>
<svg style="left:683px;top:420px" width="17" height="17" viewBox="0 0 17 17"><circle cx="8.500" cy="8.500" r="7" fill="none" stroke="#00802f" stroke-width="1.900"/><path d="M5.200 8.700 7.600 11 11.900 6.200" fill="none" stroke="#00802f" stroke-width="1.900"/></svg>
<div class="t ok" style="top:418px">利用可能</div>
<div class="t c3" style="top:419px">インスタンス</div>
<div class="t c4" style="top:419px;letter-spacing:-.2px">PostgreSQL</div>
<div class="t c5" style="top:419px;transform:scaleX(.89);transform-origin:0 50%">SECOND</div>
<div class="t c6" style="top:419px;letter-spacing:.28px">ap-northeast-1a</div>
<div class="t c7" style="top:419px;width:59px;overflow:hidden;letter-spacing:.2px">db.t3.small</div>
<div class="abs radio" style="top:464px;border:5px solid #295eda"></div>
<div class="t lnk" style="top:460px;letter-spacing:0.145px">haken-search-engine-prod</div>
<svg style="left:683px;top:464px" width="17" height="17" viewBox="0 0 17 17"><circle cx="8.500" cy="8.500" r="7" fill="none" stroke="#00802f" stroke-width="1.900"/><path d="M5.200 8.700 7.600 11 11.900 6.200" fill="none" stroke="#00802f" stroke-width="1.900"/></svg>
<div class="t ok" style="top:462px">利用可能</div>
<div class="t c3" style="top:463px">インスタンス</div>
<div class="t c4" style="top:463px;letter-spacing:-.2px">PostgreSQL</div>
<div class="t c5" style="top:463px;transform:scaleX(.89);transform-origin:0 50%">SECOND</div>
<div class="t c6" style="top:463px;letter-spacing:.28px">ap-northeast-1d</div>
<div class="t c7" style="top:463px;width:59px;overflow:hidden;letter-spacing:.2px">db.t3.small</div>
<div class="abs" style="left:304px;top:538px;width:1576px;height:1px;background:#e4e4ea"></div>
<div class="abs radio" style="top:508px"></div>
<div class="t lnk" style="top:504px;letter-spacing:0.105px">haken-search-engine-stg</div>
<svg style="left:683px;top:508px" width="17" height="17" viewBox="0 0 17 17"><circle cx="8.500" cy="8.500" r="7" fill="none" stroke="#00802f" stroke-width="1.900"/><path d="M5.200 8.700 7.600 11 11.900 6.200" fill="none" stroke="#00802f" stroke-width="1.900"/></svg>
<div class="t ok" style="top:506px">利用可能</div>
<div class="t c3" style="top:507px">インスタンス</div>
<div class="t c4" style="top:507px;letter-spacing:-.2px">PostgreSQL</div>
<div class="t c5" style="top:507px;transform:scaleX(.89);transform-origin:0 50%">SECOND</div>
<div class="t c6" style="top:507px;letter-spacing:.28px">ap-northeast-1a</div>
<div class="t c7" style="top:507px;width:59px;overflow:hidden;letter-spacing:.2px">db.t3.small</div>
<div class="abs" style="left:304px;top:582px;width:1576px;height:1px;background:#e4e4ea"></div>
<div class="abs radio" style="top:552px"></div>
<div class="t lnk" style="top:548px;letter-spacing:0.083px">kaseguzo-prod</div>
<svg style="left:683px;top:552px" width="17" height="17" viewBox="0 0 17 17"><circle cx="8.500" cy="8.500" r="7" fill="none" stroke="#00802f" stroke-width="1.900"/><path d="M5.200 8.700 7.600 11 11.900 6.200" fill="none" stroke="#00802f" stroke-width="1.900"/></svg>
<div class="t ok" style="top:550px">利用可能</div>
<div class="t c3" style="top:551px">インスタンス</div>
<div class="t c4" style="top:551px;letter-spacing:.08px">MySQL Community</div>
<div class="t c5" style="top:551px;transform:scaleX(.89);transform-origin:0 50%">SECOND</div>
<div class="t c6" style="top:551px;letter-spacing:.28px">ap-northeast-1a</div>
<div class="t c7" style="top:551px;width:59px;overflow:hidden;letter-spacing:.2px">db.t3.micro</div>
<div class="abs" style="left:304px;top:626px;width:1576px;height:1px;background:#e4e4ea"></div>
<div class="abs radio" style="top:596px"></div>
<div class="t lnk" style="top:592px;letter-spacing:0.035px">kaseguzo-stg</div>
<svg style="left:683px;top:596px" width="17" height="17" viewBox="0 0 17 17"><circle cx="8.500" cy="8.500" r="7" fill="none" stroke="#656871" stroke-width="1.900"/><path d="M5 8.500h7" stroke="#656871" stroke-width="1.900"/></svg>
<div class="t ok" style="top:594px;color:#656871">一時的に停止済み</div>
<div class="t c3" style="top:595px">インスタンス</div>
<div class="t c4" style="top:595px;letter-spacing:.08px">MySQL Community</div>
<div class="t c5" style="top:595px;transform:scaleX(.89);transform-origin:0 50%">SECOND</div>
<div class="t c6" style="top:595px;letter-spacing:.28px">ap-northeast-1a</div>
<div class="t c7" style="top:595px;width:59px;overflow:hidden;letter-spacing:.2px">db.t3.micro</div>
<div class="abs" style="left:304px;top:670px;width:1576px;height:1px;background:#e4e4ea"></div>
<div class="abs radio" style="top:640px"></div>
<div class="t lnk" style="top:636px;letter-spacing:0.377px">kigyou-prod</div>
<svg style="left:683px;top:640px" width="17" height="17" viewBox="0 0 17 17"><circle cx="8.500" cy="8.500" r="7" fill="none" stroke="#00802f" stroke-width="1.900"/><path d="M5.200 8.700 7.600 11 11.900 6.200" fill="none" stroke="#00802f" stroke-width="1.900"/></svg>
<div class="t ok" style="top:638px">利用可能</div>
<div class="t c3" style="top:639px">インスタンス</div>
<div class="t c4" style="top:639px;letter-spacing:-.2px">PostgreSQL</div>
<div class="t c5" style="top:639px;transform:scaleX(.89);transform-origin:0 50%">SECOND</div>
<div class="t c6" style="top:639px;letter-spacing:.28px">ap-northeast-1a</div>
<div class="t c7" style="top:639px;width:59px;overflow:hidden;letter-spacing:.2px">db.t3.medium</div>
<div class="abs radio" style="top:684px"></div>
<div class="t lnk" style="top:680px;letter-spacing:0.289px">kigyou-stg</div>
<svg style="left:683px;top:684px" width="17" height="17" viewBox="0 0 17 17"><circle cx="8.500" cy="8.500" r="7" fill="none" stroke="#00802f" stroke-width="1.900"/><path d="M5.200 8.700 7.600 11 11.900 6.200" fill="none" stroke="#00802f" stroke-width="1.900"/></svg>
<div class="t ok" style="top:682px">利用可能</div>
<div class="t c3" style="top:683px">インスタンス</div>
<div class="t c4" style="top:683px;letter-spacing:-.2px">PostgreSQL</div>
<div class="t c5" style="top:683px;transform:scaleX(.89);transform-origin:0 50%">SECOND</div>
<div class="t c6" style="top:683px;letter-spacing:.28px">ap-northeast-1a</div>
<div class="t c7" style="top:683px;width:59px;overflow:hidden;letter-spacing:.2px">db.t3.micro</div>
<div class="abs" style="left:297px;top:587px;width:719px;height:36px;border:3px solid #fb0a12"></div>
<svg style="left:308px;top:718px" width="8" height="10" viewBox="0 0 8 10"><path d="M7.500 .5v9L.5 5z" fill="#6e6e6e"/></svg>
<div class="abs" style="left:322px;top:719px;width:917px;height:8px;border-radius:4px;background:#8b8b8b"></div>
<svg style="left:1867px;top:718px" width="8" height="10" viewBox="0 0 8 10"><path d="M.5 .5v9L7.500 5z" fill="#6e6e6e"/></svg>
<!--AWS-MAIN-END-->
<div class="abs" id="awsfoot"></div>
<!--AWS-FOOT-START-->
<svg style="left:15px;top:1006px" width="16" height="16" viewBox="0 0 16 16"><rect x="1" y="1" width="14" height="14" rx="2.300" fill="none" stroke="#fff" stroke-width="1.700"/><path d="M4.300 5 7.500 8 4.300 11M8 11.500h4" fill="none" stroke="#fff" stroke-width="1.600"/></svg>
<div class="t ft" style="left:36px;font-weight:700;letter-spacing:-.35px">CloudShell</div>
<div class="t ft" style="left:120px;font-weight:500">フィードバック</div>
<svg style="left:230px;top:1006px" width="13" height="16" viewBox="0 0 13 16"><path d="M9.500 4V1.500h-8v13h8V11" fill="none" stroke="#fff" stroke-width="1.500"/><path d="M6 5.500h6.500v4H9l-1.500 1.500V9.500H6z" fill="#161d26" stroke="#fff" stroke-width="1.200"/><path d="M4 12.500h3" stroke="#fff" stroke-width="1.200"/></svg>
<div class="t ft" style="left:246px;font-weight:500">コンソールモバイルアプリ</div>
<div class="t ft" style="left:1322px">© 2025, Amazon Web Services, Inc. またはその関連会社。</div>
<div class="t ft" style="left:1666px;font-weight:500">プライバシー</div>
<div class="t ft" style="left:1763px;font-weight:500">用語</div>
<div class="t ft" style="left:1812px;font-weight:500">Cookie の設定</div>
<!--AWS-FOOT-END-->

<!-- SCROLLBAR -->
<div class="abs" style="left:1904px;top:120px;width:15px;height:911px;background:#fff"></div>
<div class="abs" style="left:1907px;top:138px;width:9px;height:751px;border-radius:4.500px;background:#8b8b8b"></div>
<!--SCROLL-START-->
<svg style="left:1907px;top:125px" width="9" height="7" viewBox="0 0 9 7"><path d="M0 7h9L4.500 .500z" fill="#8b8b8b"/></svg>
<svg style="left:1907px;top:1020px" width="9" height="7" viewBox="0 0 9 7"><path d="M0 0h9L4.500 6.500z" fill="#8b8b8b"/></svg>
<!--SCROLL-END-->

<!-- WINDOWS -->
<div class="abs" id="taskbar"></div>
<!--TASKBAR-START-->
<svg style="left:17px;top:1043px" width="26" height="24" viewBox="0 0 26 24"><defs><linearGradient id="cl" x1="0" y1="0" x2="0" y2="1"><stop offset="0" stop-color="#eef4fc"/><stop offset=".6" stop-color="#c5d7f4"/><stop offset="1" stop-color="#8eaee8"/></linearGradient><radialGradient id="sn" cx=".4" cy=".4" r=".7"><stop offset="0" stop-color="#ffc02e"/><stop offset="1" stop-color="#f08a1c"/></radialGradient></defs><circle cx="18.500" cy="8" r="5.800" fill="url(#sn)"/><path d="M6 22.500a4.800 4.800 0 0 1-.7-9.550A6 6 0 0 1 16.800 11.500a4.300 4.300 0 0 1 3.500 1.800A4.700 4.700 0 0 1 20.500 22.500z" fill="url(#cl)"/></svg>
<div class="t" style="left:49px;top:1039px;font-size:12px;line-height:16px;color:#1f1f1f">20°C</div>
<div class="t" style="left:49px;top:1055px;font-size:12px;line-height:16px;color:#5c5c5c;letter-spacing:-.15px">Nhiều mây</div>
<svg style="left:638px;top:1044px" width="23" height="23" viewBox="0 0 23 23"><defs><linearGradient id="wl" x1="0" y1="0" x2="1" y2="1"><stop offset="0" stop-color="#5ad0ff"/><stop offset="1" stop-color="#0a73d0"/></linearGradient></defs><g fill="url(#wl)"><rect x="0" y="0" width="11" height="11" rx=".8"/><rect x="12" y="0" width="11" height="11" rx=".8"/><rect x="0" y="12" width="11" height="11" rx=".8"/><rect x="12" y="12" width="11" height="11" rx=".8"/></g></svg>
<div class="abs" style="left:675px;top:1039px;width:218px;height:32px;border-radius:16px;background:#ebf4f9;border:1px solid #c9dae3;box-shadow:0 1px 0 rgba(0,0,0,.08)"></div>
<svg style="left:684px;top:1046px" width="18" height="18" viewBox="0 0 18 18"><circle cx="7.800" cy="7.800" r="5.600" fill="none" stroke="#1f1f1f" stroke-width="1.700"/><path d="M12 12l4.300 4.300" stroke="#1f1f1f" stroke-width="1.900" stroke-linecap="round"/></svg>
<div class="t" style="left:711px;top:1045px;font-size:14px;color:#4a4a4a;letter-spacing:-.5px">Search</div>
<div class="abs" style="left:912px;top:1044px;width:18px;height:17px;border-radius:2px;background:linear-gradient(135deg,#f5f5f5,#d8dde0)"></div>
<div class="abs" style="left:906px;top:1050px;width:18px;height:16px;border-radius:2px;background:#222"></div>
<div class="abs" style="left:912px;top:1050px;width:12px;height:11px;background:linear-gradient(135deg,#8e8e8e,#c9c9c9)"></div>
<svg style="left:949px;top:1043px" width="26" height="26" viewBox="0 0 26 26"><path d="M8 2.500h9a6 6 0 0 1 6 6v7a6 6 0 0 1-6 6h-7.500L5 24l.5-3.500A6 6 0 0 1 2 15.500v-7a6 6 0 0 1 6-6z" fill="#fff" stroke="#0a6cff" stroke-width="2.200"/><text x="12.500" y="14.500" font-family="Liberation Sans,sans-serif" font-size="7.500" font-weight="700" fill="#0a6cff" text-anchor="middle">Zalo</text></svg>
<div class="abs" style="left:964px;top:1038px;width:15px;height:15px;border-radius:8px;background:#e8111b;color:#fff;font-size:9px;font-weight:700;line-height:15px;text-align:center;letter-spacing:-.3px">5+</div>
<div class="abs" style="left:994px;top:1046px;width:24px;height:19px;background:#f4f6f8;border:1px solid #9aa3aa"></div>
<div class="abs" style="left:1003px;top:1049px;width:13px;height:15px;background:#1a73c8"></div>
<div class="abs" style="left:997px;top:1050px;width:4px;height:1px;background:#666;box-shadow:0 3px 0 #666,0 6px 0 #666,0 9px 0 #666"></div>
<div class="abs" style="left:1006px;top:1038px;width:16px;height:16px;border-radius:8px;background:#7d8f9a;color:#fff;font-size:10px;line-height:16px;text-align:center">M</div>
<svg style="left:1037px;top:1042px" width="26" height="26" viewBox="0 0 26 26"><circle cx="15" cy="8" r="4" fill="#7b83eb"/><circle cx="21" cy="10" r="2.600" fill="#5059c9"/><path d="M9 12h11a1.500 1.500 0 0 1 1.500 1.500v6a6 6 0 0 1-12 0z" fill="#7b83eb"/><path d="M19 13h5.500v5.500a3.500 3.500 0 0 1-5.500 2.800z" fill="#5059c9"/><rect x="1" y="10" width="12" height="12" rx="1.800" fill="#4b53bc"/><text x="7" y="19.500" font-family="Liberation Sans,sans-serif" font-size="9" font-weight="700" fill="#fff" text-anchor="middle">T</text></svg>
<svg style="left:1051px;top:1039px" width="15" height="15" viewBox="0 0 15 15"><circle cx="7.500" cy="7.500" r="7" fill="#13a10e" stroke="#fff" stroke-width=".8"/><path d="M4.300 7.700 6.600 10 10.800 5.500" fill="none" stroke="#fff" stroke-width="1.600"/></svg>
<svg style="left:1081px;top:1043px" width="25" height="25" viewBox="0 0 24 24"><circle cx="12" cy="12" r="11.500" fill="#fff"/><path d="M12 12 2.040 6.250A11.500 11.500 0 0 1 21.960 6.250z" fill="#ea4335"/><path d="M12 12 21.960 6.250A11.500 11.500 0 0 1 12 23.500z" fill="#fbbc05"/><path d="M12 12 12 23.500A11.500 11.500 0 0 1 2.040 6.250z" fill="#34a853"/><circle cx="12" cy="12" r="5.500" fill="#fff"/><circle cx="12" cy="12" r="4.300" fill="#4285f4"/></svg>
<div class="abs" style="left:1095px;top:1038px;width:16px;height:16px;border-radius:8px;background:radial-gradient(circle at 55% 45%,#d9c7b0 0 25%,#6f8a6a 26% 60%,#9aa6a0 61%)"></div>
<svg style="left:1125px;top:1043px" width="25" height="23" viewBox="0 0 25 23"><path d="M1 3.500A1.500 1.500 0 0 1 2.500 2h6l2.500 2.500h11.500A1.500 1.500 0 0 1 24 6v14.500A1.500 1.500 0 0 1 22.500 22h-20A1.500 1.500 0 0 1 1 20.500z" fill="#f5b82e"/><path d="M1 7.500h23v13A1.500 1.500 0 0 1 22.500 22h-20A1.500 1.500 0 0 1 1 20.500z" fill="#ffd45a"/><path d="M6 16.500h13V22H6z" fill="#1f8fe0"/><path d="M9 18h7" stroke="#1565c0" stroke-width="1.400"/></svg>
<svg style="left:1169px;top:1043px" width="23" height="23" viewBox="0 0 23 23"><defs><linearGradient id="wg" x1="0" y1="0" x2="1" y2="1"><stop offset="0" stop-color="#4fc3ff"/><stop offset=".5" stop-color="#2b7cd3"/><stop offset="1" stop-color="#103f91"/></linearGradient></defs><rect x="4" y="1" width="18" height="21" rx="3" fill="url(#wg)"/><path d="M4 8h18v7H4z" fill="#2368c4" opacity=".7"/><rect x="0" y="8.500" width="12" height="12" rx="2" fill="#185abd"/><text x="6" y="18" font-family="Liberation Sans,sans-serif" font-size="8.500" font-weight="700" fill="#fff" text-anchor="middle">W</text></svg>
<svg style="left:1213px;top:1043px" width="23" height="23" viewBox="0 0 23 23"><rect x="4" y="1" width="18" height="21" rx="3" fill="#21a366"/><path d="M13 1h6a3 3 0 0 1 3 3v4h-9z" fill="#5fd98d"/><path d="M13 8h9v7h-9z" fill="#107c41"/><path d="M4 8h9v14H7a3 3 0 0 1-3-3z" fill="#185c37"/><rect x="0" y="8.500" width="12" height="12" rx="2" fill="#107c41"/><text x="6" y="18" font-family="Liberation Sans,sans-serif" font-size="8.500" font-weight="700" fill="#fff" text-anchor="middle">X</text></svg>
<svg style="left:1259px;top:1044px" width="22" height="22" viewBox="0 0 22 22"><rect width="22" height="22" rx="4" fill="#b30b00"/><path d="M5 16.500c1-2.500 4.800-4 8.800-4.200 2.200-.1 3.500.9 2.800 1.700-.9 1-4.200-.6-6.200-3.500C8.800 8 8.700 4.500 10 4.500c1.400 0 1 3.500-.5 7.200-1.300 3.200-3 5.600-4 5.600-.6 0-.7-.4-.5-.8z" fill="none" stroke="#fff" stroke-width="1.300"/></svg>
<div class="abs" style="left:959px;top:1071px;width:6px;height:3px;border-radius:1.500px;background:#6f8089"></div>
<div class="abs" style="left:1003px;top:1071px;width:6px;height:3px;border-radius:1.500px;background:#6f8089"></div>
<div class="abs" style="left:1046.5px;top:1071px;width:6px;height:3px;border-radius:1.500px;background:#6f8089"></div>
<div class="abs" style="left:1091px;top:1071px;width:6px;height:3px;border-radius:1.500px;background:#6f8089"></div>
<div class="abs" style="left:1135px;top:1071px;width:6px;height:3px;border-radius:1.500px;background:#6f8089"></div>
<div class="abs" style="left:1178.5px;top:1071px;width:6px;height:3px;border-radius:1.500px;background:#6f8089"></div>
<div class="abs" style="left:1222.5px;top:1071px;width:6px;height:3px;border-radius:1.500px;background:#6f8089"></div>
<div class="abs" style="left:1266.5px;top:1071px;width:6px;height:3px;border-radius:1.500px;background:#6f8089"></div>
<div class="abs" style="left:1603px;top:1036px;width:30px;height:38px;border-radius:4px;background:#e5eff6"></div>
<svg style="left:1612px;top:1051px" width="12" height="8" viewBox="0 0 12 8"><path d="M1.500 1.500 6 6l4.500-4.500" fill="none" stroke="#1f1f1f" stroke-width="1.300"/></svg>
<svg style="left:1641px;top:1048px" width="18" height="13" viewBox="0 0 18 13"><path d="M4.500 12a3.500 3.500 0 0 1-.4-6.980A5 5 0 0 1 13.600 6 3 3 0 0 1 14 12z" fill="#c4c8cb" stroke="#3a3a3a" stroke-width="1"/></svg>
<svg style="left:1673px;top:1049px" width="18" height="12" viewBox="0 0 18 12"><path d="M4.500 11.500a3.500 3.500 0 0 1-.4-6.980A5 5 0 0 1 13.600 5.500 3 3 0 0 1 14 11.500z" fill="#1a8fe8"/><path d="M7 11.500a3 3 0 0 1 1-5.800 4 4 0 0 1 5.600-.2A3 3 0 0 1 14 11.500z" fill="#3bb0ff"/></svg>
<div class="t" style="left:1708px;top:1042px;font-size:21px;line-height:26px;color:#1f1f1f;font-weight:400;transform:scaleX(.85);transform-origin:0 50%">A</div>
<svg style="left:1743px;top:1046px" width="18" height="18" viewBox="0 0 18 18"><circle cx="9" cy="9" r="8" fill="none" stroke="#1f1f1f" stroke-width="1.100"/><text x="8.600" y="13.200" font-family="Liberation Sans,sans-serif" font-size="12.500" fill="#1f1f1f" text-anchor="middle">J</text></svg>
<svg style="left:1781px;top:1046px" width="18" height="18" viewBox="0 0 18 18"><path d="M11 2H1.500v10.500H12M6.500 12.500V16M3.500 16.500H11" fill="none" stroke="#1f1f1f" stroke-width="1.200"/><rect x="12" y="1" width="4" height="6" rx=".8" fill="#e2eef6" stroke="#1f1f1f" stroke-width="1.100"/><path d="M14 7v8.500h-2" fill="none" stroke="#1f1f1f" stroke-width="1.100"/></svg>
<svg style="left:1805px;top:1047px" width="17" height="16" viewBox="0 0 17 16"><path d="M1.500 5.500H4L8 2v12L4 10.500H1.500z" fill="none" stroke="#1f1f1f" stroke-width="1.100" stroke-linejoin="round"/><path d="M10.500 5.500a3.500 3.500 0 0 1 0 5M12.500 3.500a6.300 6.300 0 0 1 0 9" fill="none" stroke="#1f1f1f" stroke-width="1.100"/><path d="M14.500 1.800a8.800 8.800 0 0 1 0 12.400" fill="none" stroke="#9aa" stroke-width="1"/></svg>
<div class="t" style="left:1820px;top:1040px;width:80px;text-align:right;font-size:12px;line-height:16px;color:#1f1f1f;letter-spacing:-.1px">10:51</div>
<div class="t" style="left:1820px;top:1055px;width:80px;text-align:right;font-size:12px;line-height:16px;color:#1f1f1f;letter-spacing:.05px">01/12/2025</div>
<!--TASKBAR-END-->
<div class="abs" id="tray"></div>
<!--TRAY-START-->
<div class="abs" style="left:1639px;top:895px;width:38px;height:38px;border-radius:4px;background:#fcfcfc;box-shadow:0 0 0 1px rgba(0,0,0,.04)"></div>
<svg style="left:1530px;top:866px" width="16" height="16" viewBox="0 0 16 16"><path d="M4.800 1h6.500a3.500 3.500 0 0 1 3.500 3.500v6a3.500 3.500 0 0 1-3.500 3.500H6.500L2.500 15l.2-2A3.500 3.500 0 0 1 1.200 10.500v-6A3.500 3.500 0 0 1 4.800 1z" fill="#fff" stroke="#0a6cff" stroke-width="1.500"/><text x="7.800" y="9.300" font-family="Liberation Sans,sans-serif" font-size="4.800" font-weight="700" fill="#0a6cff" text-anchor="middle">Zalo</text><circle cx="13" cy="2.800" r="2.700" fill="#f23b3b"/></svg>
<svg style="left:1570px;top:866px" width="16" height="16" viewBox="0 0 16 16"><path d="M3 1.500h10V5H3z" fill="#2b2b33"/><rect x="0.500" y="4.500" width="15" height="7.500" rx="1.500" fill="#2b2b33"/><path d="M5.500 5.500h5L8 8z" fill="#dfe3ea"/><rect x="3.500" y="9.500" width="9" height="5" fill="#f4f4f6" stroke="#2b2b33" stroke-width="1"/></svg>
<svg style="left:1610px;top:866px" width="16" height="16" viewBox="0 0 16 16"><rect width="16" height="16" fill="#0c8f1f"/><circle cx="5" cy="5" r="3.800" fill="#fff"/><path d="M3.200 5 4.600 6.400 7 3.600" fill="none" stroke="#0c8f1f" stroke-width="1.300"/><circle cx="11.500" cy="4.500" r="2" fill="#fff"/><rect x="8.500" y="7" width="6.500" height="3.500" fill="#fff"/><rect x="4" y="9" width="6" height="5.500" fill="#e9f6ea"/><rect x="11" y="11.500" width="4" height="3" fill="#fff"/></svg>
<svg style="left:1650px;top:866px" width="16" height="16" viewBox="0 0 16 16"><rect x="5" y="0.500" width="11" height="15" rx="2" fill="#ca64ea"/><path d="M5 5.500h11v5H5z" fill="#ae4bd5"/><path d="M5 10.500h11V13a2 2 0 0 1-2 2H5z" fill="#9332bf"/><rect x="0" y="4" width="10" height="10" rx="1.800" fill="#7719aa"/><text x="5" y="12" font-family="Liberation Sans,sans-serif" font-size="7.500" font-weight="700" fill="#fff" text-anchor="middle">N</text></svg>
<svg style="left:1690px;top:866px" width="16" height="16" viewBox="0 0 16 16"><defs><linearGradient id="sw" x1="0" y1="0" x2="1" y2="1"><stop offset="0" stop-color="#f3e6d8"/><stop offset="1" stop-color="#d9c2ae"/></linearGradient></defs><rect width="16" height="16" fill="url(#sw)"/><rect x=".4" y=".4" width="15.200" height="15.200" fill="none" stroke="#c99a8a" stroke-width=".6"/><g fill="none" stroke="#d3202a" stroke-width="1.500" stroke-linecap="round"><path d="M4.500 2.500c3 .5 5.500 2.500 7 5.500"/><path d="M3.200 4.800c3 .5 5.800 2.800 7 6"/><path d="M3 7.500c2.500.5 4.800 2.500 5.800 5.300"/><path d="M7.500 1.800c2.500 1 4.500 3 5.300 5.700"/><path d="M3.800 10.300c1.500.5 2.600 1.500 3.200 3"/></g></svg>
<svg style="left:1530px;top:906px" width="16" height="16" viewBox="0 0 16 16"><defs><linearGradient id="cp1" x1="0" y1="0" x2="1" y2="1"><stop offset="0" stop-color="#1f9bff"/><stop offset=".55" stop-color="#9a6bf5"/><stop offset="1" stop-color="#ff64a6"/></linearGradient><linearGradient id="cp2" x1="0" y1="1" x2="1" y2="0"><stop offset="0" stop-color="#ffb21f"/><stop offset=".5" stop-color="#3fc66e"/><stop offset="1" stop-color="#1fa2ff"/></linearGradient></defs><path d="M5.500 .8h4.300c1.300 0 2 .7 2.400 1.900L14.300 9c.4 1.400-.3 2.400-1.800 2.400h-2.300L8.400 4.600C8 3.300 7.500 2.800 6.500 2.800h-2z" fill="url(#cp1)"/><path d="M2.500 3.500h4l1.900 6.800c.4 1.300.9 1.800 1.900 1.800H4.200c-1.300 0-2-.7-2.400-1.900L.5 6C.1 4.500.9 3.500 2.500 3.500z" fill="url(#cp2)"/><rect x="5.500" y="11" width="10.500" height="4.500" rx=".6" fill="#1c1c1c"/><text x="10.750" y="14.600" font-family="Liberation Sans,sans-serif" font-size="3.600" font-weight="700" fill="#fff" text-anchor="middle">NEW</text></svg>
<svg style="left:1570px;top:906px" width="16" height="16" viewBox="0 0 16 16"><circle cx="9" cy="3.500" r="2.800" fill="#7b83eb"/><circle cx="13.500" cy="5" r="1.900" fill="#5059c9"/><path d="M5 6.500h8a1 1 0 0 1 1 1V11a4.500 4.500 0 0 1-9 0z" fill="#7b83eb"/><rect x="0" y="5.500" width="8.500" height="8.500" rx="1.300" fill="#4b53bc"/><text x="4.250" y="12.300" font-family="Liberation Sans,sans-serif" font-size="6.500" font-weight="700" fill="#fff" text-anchor="middle">T</text><circle cx="11.800" cy="11.800" r="4" fill="#13a10e" stroke="#fff" stroke-width=".7"/><path d="M9.900 11.900 11.300 13.300 13.800 10.500" fill="none" stroke="#fff" stroke-width="1.200"/></svg>
<svg style="left:1610px;top:906px" width="16" height="16" viewBox="0 0 16 16"><circle cx="6" cy="6" r="5.800" fill="#2f8fe6"/><path d="M3 2c2 .5 3 2 2.500 3.500S3 7.500 3.500 9.500 6 11.500 6 11.800 1 10 .5 6.500 1.500 2.500 3 2zM8.500 1c1.500 1 3 2.500 3 4.500-1.500.5-3-.5-3.500-2S7.500 1.500 8.500 1z" fill="#3cb44a"/><path d="M7 8h7.500a1.300 1.300 0 0 1 1.300 1.300v3.400A1.300 1.300 0 0 1 14.500 14H12l-1.500 1.800V14H7a1.300 1.300 0 0 1-1.300-1.300V9.300A1.300 1.300 0 0 1 7 8z" fill="#eef3fb" stroke="#8aa0c0" stroke-width=".8"/><path d="M8 10h5.500" stroke="#e0435a" stroke-width="1"/><path d="M8 12h4" stroke="#4a7fd6" stroke-width="1"/></svg>
<svg style="left:1650px;top:906px" width="16" height="16" viewBox="0 0 16 16"><defs><linearGradient id="fl" x1="0" y1="0" x2="1" y2="1"><stop offset="0" stop-color="#6d1fb0"/><stop offset="1" stop-color="#a0189a"/></linearGradient><linearGradient id="fm" x1="0" y1="1" x2="1" y2="0"><stop offset="0" stop-color="#ffc83a"/><stop offset=".6" stop-color="#ff8a1f"/><stop offset="1" stop-color="#ff5a3c"/></linearGradient></defs><circle cx="8" cy="8" r="8" fill="url(#fl)"/><path d="M3.500 11c0-2.800 1.700-3.500 2.400-6 .9 1 1.300 2 1.300 3C8.300 6.800 10 4.800 12.800 3.800c-.6 2.800.4 4.200-1 6.700-1.100 1.700-2.900 2.300-4.500 2.300S3.500 12.500 3.500 11z" fill="url(#fm)"/></svg>
<svg style="left:1690px;top:906px" width="16" height="16" viewBox="0 0 16 16"><defs><linearGradient id="vg" x1="0" y1="0" x2="0" y2="1"><stop offset="0" stop-color="#fff4f3"/><stop offset="1" stop-color="#f6d6d4"/></linearGradient></defs><rect x=".6" y=".6" width="14.800" height="14.800" rx="1" fill="url(#vg)" stroke="#dc5a58" stroke-width="1.200"/><text x="8" y="13" font-family="Liberation Sans,sans-serif" font-size="13" font-weight="400" fill="#dd4f4e" stroke="#dd4f4e" stroke-width=".4" text-anchor="middle">V</text></svg>
<svg style="left:1530px;top:946px" width="16" height="16" viewBox="0 0 16 16"><rect x="4.200" y=".700" width="6" height="4.300" fill="#fff" stroke="#111" stroke-width="1.300"/><rect x="5.500" y="2" width="1.300" height="1.300" fill="#111"/><rect x="7.700" y="2" width="1.300" height="1.300" fill="#111"/><rect x="3" y="5" width="8.400" height="10.200" rx="1" fill="#fff" stroke="#111" stroke-width="1.400"/><path d="M9.500 13.300 11.500 15.300 15.600 10.800" fill="none" stroke="#333" stroke-width="1.100"/></svg>
<svg style="left:1570px;top:946px" width="16" height="16" viewBox="0 0 16 16"><circle cx="8" cy="8" r="8" fill="#f3b63a"/><rect x="3" y="2" width="10" height="12.500" rx="1" fill="#e9f0f2" stroke="#2f7f86" stroke-width="1.200"/><path d="M5 5h4M5 7.500h6M5 10h3" stroke="#b04aa0" stroke-width="1"/><path d="M9 11.500 13 6.500" stroke="#e0452f" stroke-width="1.300"/><path d="M5 12h3" stroke="#4aa05a" stroke-width="1"/></svg>
<svg style="left:1610px;top:946px" width="16" height="16" viewBox="0 0 16 16"><path d="M11.500 4.500C9.500 2 5 2 3 5s-.5 7 3 7.500" fill="none" stroke="#1c1c1c" stroke-width="1.600"/><path d="M10 6.500c-1.300-1.300-3.600-1.200-4.600.4s-.2 3.500 1.400 3.900" fill="none" stroke="#1c1c1c" stroke-width="1.300"/><path d="M13.500 3.500c1.500 1 2.300 2.500 2 4" fill="none" stroke="#1c1c1c" stroke-width="1.200"/><circle cx="11.300" cy="9.800" r="3.600" fill="#ee3a12"/></svg>
<svg style="left:1650px;top:946px" width="16" height="16" viewBox="0 0 16 16"><path d="M8 .5c2.500 1.200 4.800 1.600 7 1.500v6.500c0 3.500-3 6-7 7.300C4 14.500 1 12 1 8.500V2C3.200 2.100 5.500 1.700 8 .5z" fill="#d7263d"/><path d="M3.800 10c1.200-3 2.500-5 4.200-5s3 2 4.200 5M5.500 10.500 8 7l2.500 3.500" fill="none" stroke="#fff" stroke-width="1.200" stroke-linejoin="round"/></svg>
<svg style="left:1690px;top:946px" width="16" height="16" viewBox="0 0 16 16"><path d="M7.500 .5c2.200 1.200 4.300 1.800 6.500 1.800v5.200c0 3.800-2.600 6.500-6.500 8C3.600 14 1 11.300 1 7.500V2.300C3.200 2.300 5.300 1.700 7.500 .5z" fill="#1d7fd6"/><path d="M7.500 .5c2.200 1.200 4.300 1.800 6.500 1.800v5.200H7.500z" fill="#45b5f5"/><path d="M1 7.500h6.500v8C3.600 14 1 11.300 1 7.500z" fill="#3aa4ea"/><path d="M11.500 6.800 16 15.600H7z" fill="#ffc61a"/><path d="M11.500 9.800v3M11.500 13.700v1" stroke="#1c1c1c" stroke-width="1.100"/></svg>
<svg style="left:1530px;top:986px" width="16" height="16" viewBox="0 0 16 16"><rect width="16" height="16" fill="#1a1a1a"/><path d="M8 4h5.500v8H8z" fill="#76b900"/><path d="M2.200 8c1.400-2.300 3.300-3.400 5.800-3.400 2 0 3.500 1 4.500 2.400-1 1.700-2.500 3.400-4.900 3.400-1.900 0-3.100-1.200-3.100-2.500 0-1.100.9-1.900 2.100-1.900 1 0 1.800.6 2.300 1.400-.5.700-1.100 1.200-1.900 1.200" fill="none" stroke="#76b900" stroke-width="1.100"/><path d="M8 5.800c1.200.3 2 .9 2.600 1.700-.6.900-1.400 1.500-2.600 1.800" fill="none" stroke="#1a1a1a" stroke-width="1"/></svg>
<svg style="left:1570px;top:986px" width="16" height="16" viewBox="0 0 16 16"><circle cx="8" cy="8" r="8" fill="#2e7fd2"/><rect x="3.800" y="4.800" width="8.400" height="6" rx=".6" fill="#dfeaf7"/><path d="M6.500 12.200h3" stroke="#dfeaf7" stroke-width="1"/><path d="M5 10 10 5.500v4.500z" fill="#7fb0e6"/></svg>
<!--TRAY-END-->
</body>
</html>
